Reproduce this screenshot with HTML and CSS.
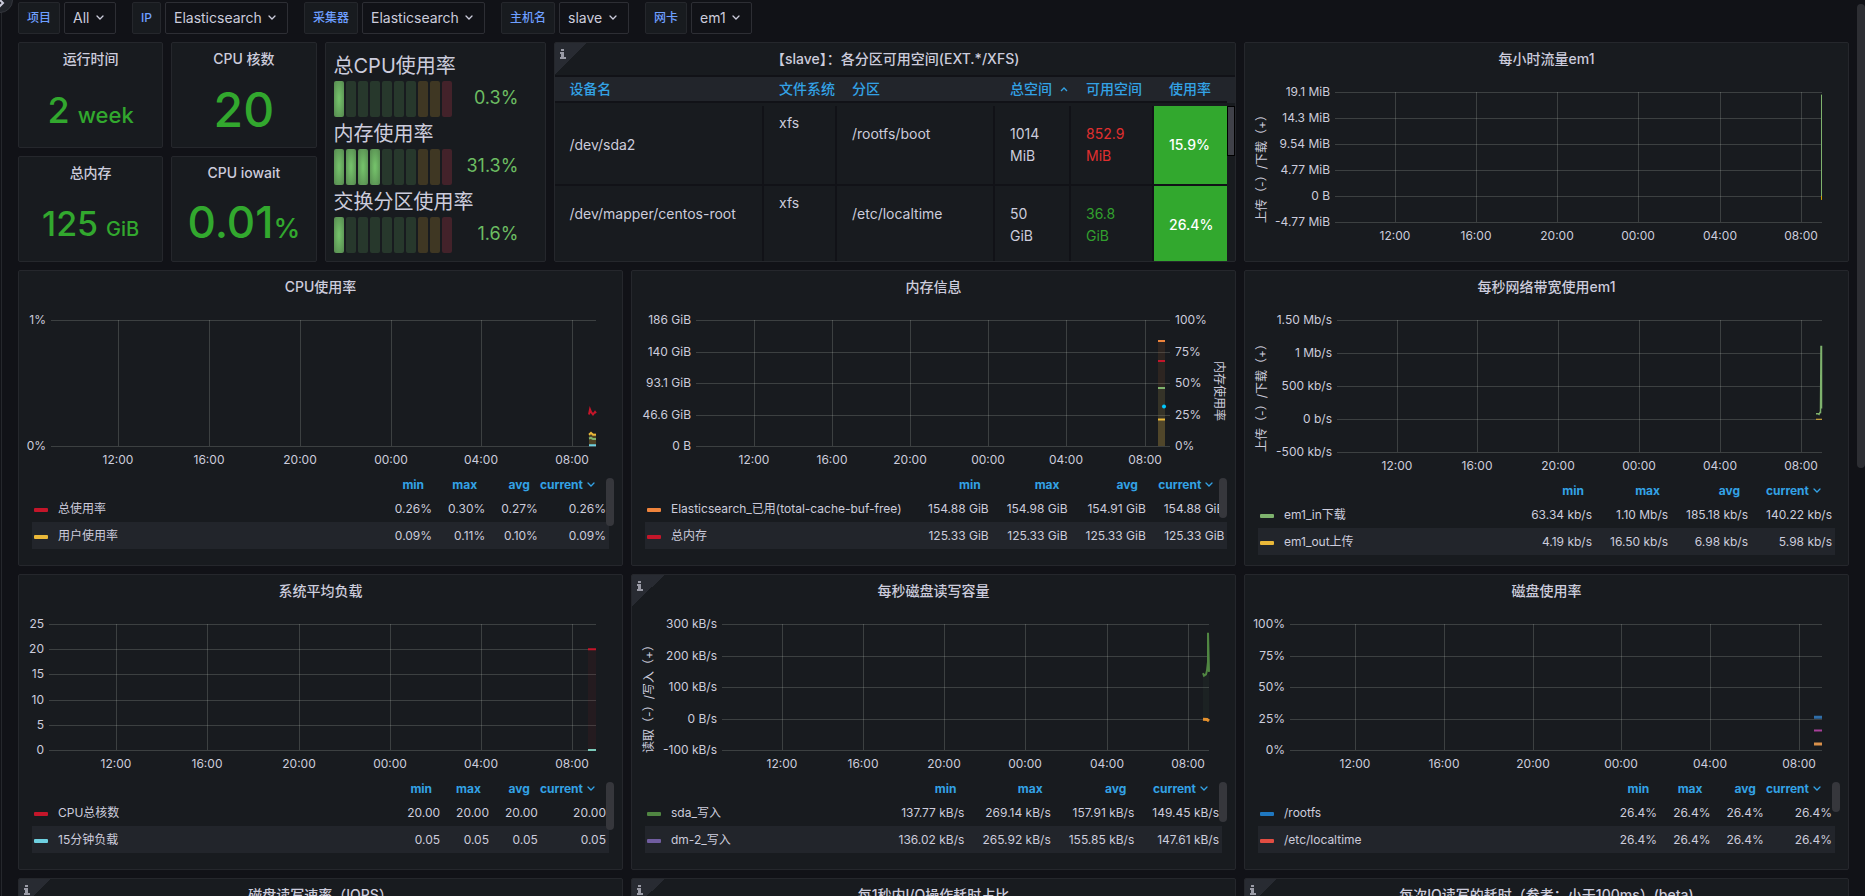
FILE: index.html
```html
<!DOCTYPE html>
<html lang="zh-CN">
<head>
<meta charset="utf-8">
<title>Node Dashboard</title>
<link rel="stylesheet" href="styles.css">
</head>
<body>
<button class="dock" aria-label="展开菜单"><svg width="12" height="12" viewBox="0 0 12 12"><path d="M3 1l5 5-5 5" fill="none" stroke="#ccccdc" stroke-width="2"/></svg></button>
<div class="page">
  <form class="vars">
    <div class="var"><label for="v1">项目</label><select id="v1"><option>All</option></select></div>
    <div class="var"><label for="v2">IP</label><select id="v2"><option>Elasticsearch</option></select></div>
    <div class="var"><label for="v3">采集器</label><select id="v3"><option>Elasticsearch</option></select></div>
    <div class="var"><label for="v4">主机名</label><select id="v4"><option>slave</option></select></div>
    <div class="var"><label for="v5">网卡</label><select id="v5"><option>em1</option></select></div>
  </form>
  <main class="grid">
    <section class="panel stat s-uptime"><h2>运行时间</h2><p class="v36">2<span class="unit spaced">week</span></p></section>
    <section class="panel stat s-cores"><h2>CPU 核数</h2><p class="v48">20</p></section>
    <section class="panel stat s-mem"><h2>总内存</h2><p class="v34">125<span class="unit spaced">GiB</span></p></section>
    <section class="panel stat s-iowait"><h2>CPU iowait</h2><p class="v44">0.01<span class="unit">%</span></p></section>

    <section class="panel gauges">
      <div class="gauge"><h3>总CPU使用率</h3><div class="row"><div class="lcd" data-lit="1"></div><span>0.3%</span></div></div>
      <div class="gauge"><h3>内存使用率</h3><div class="row"><div class="lcd" data-lit="4"></div><span>31.3%</span></div></div>
      <div class="gauge"><h3>交换分区使用率</h3><div class="row"><div class="lcd" data-lit="1"></div><span>1.6%</span></div></div>
    </section>

    <section class="panel disks">
      <span class="info"><svg width="6" height="10" viewBox="0 0 6 10"><path d="M1 0h3v2H1zM0 3h4v5h2v2H0V8h1V5H0z"/></svg></span>
      <h2>【slave】：各分区可用空间(EXT.*/XFS)</h2>
      <div class="scroller">
        <table class="parts">
          <colgroup><col><col class="c-fs"><col class="c-mount"><col class="c-total"><col class="c-free"><col class="c-use"></colgroup>
          <thead><tr><th>设备名</th><th>文件系统</th><th>分区</th><th>总空间<svg class="sort" width="8" height="5" viewBox="0 0 8 5"><path d="M1 4l3-3 3 3"/></svg></th><th>可用空间</th><th>使用率</th></tr></thead>
          <tbody>
            <tr><td>/dev/sda2</td><td class="l3">xfs</td><td class="l2">/rootfs/boot</td><td>1014 MiB</td><td class="bad">852.9 MiB</td><td class="use">15.9%</td></tr>
            <tr><td class="l2">/dev/mapper/centos-root</td><td class="l3">xfs</td><td class="l2">/etc/localtime</td><td>50<br>GiB</td><td class="good">36.8 GiB</td><td class="use">26.4%</td></tr>
          </tbody>
        </table>
        <span class="thumb square"></span>
      </div>
    </section>

    <section class="panel tall-6"><h2>每小时流量em1</h2><svg class="chart" data-chart="hourly"></svg></section>

    <section class="panel graph"><h2>CPU使用率</h2><svg class="chart" data-chart="cpu"></svg>
      <div class="legend"><table>
        <thead><tr><th></th><th>min</th><th>max</th><th>avg</th><th class="cur">current</th></tr></thead>
        <tbody>
          <tr><td><i class="key red"></i>总使用率</td><td>0.26%</td><td>0.30%</td><td>0.27%</td><td>0.26%</td></tr>
          <tr><td><i class="key yellow"></i>用户使用率</td><td>0.09%</td><td>0.11%</td><td>0.10%</td><td>0.09%</td></tr>
        </tbody></table><span class="thumb h48"></span></div>
    </section>

    <section class="panel graph"><h2>内存信息</h2><svg class="chart" data-chart="mem"></svg>
      <div class="legend wide long-names"><table>
        <thead><tr><th></th><th>min</th><th>max</th><th>avg</th><th class="cur">current</th></tr></thead>
        <tbody>
          <tr><td><i class="key orange"></i>Elasticsearch_已用(total-cache-buf-free)</td><td>154.88 GiB</td><td>154.98 GiB</td><td>154.91 GiB</td><td>154.88 GiB</td></tr>
          <tr><td><i class="key red"></i>总内存</td><td>125.33 GiB</td><td>125.33 GiB</td><td>125.33 GiB</td><td>125.33 GiB</td></tr>
        </tbody></table><span class="thumb h40"></span></div>
    </section>

    <section class="panel graph"><h2>每秒网络带宽使用em1</h2><svg class="chart" data-chart="net"></svg>
      <div class="legend wide"><table>
        <thead><tr><th></th><th>min</th><th>max</th><th>avg</th><th class="cur">current</th></tr></thead>
        <tbody>
          <tr><td><i class="key green"></i>em1_in下载</td><td>63.34 kb/s</td><td>1.10 Mb/s</td><td>185.18 kb/s</td><td>140.22 kb/s</td></tr>
          <tr><td><i class="key yellow"></i>em1_out上传</td><td>4.19 kb/s</td><td>16.50 kb/s</td><td>6.98 kb/s</td><td>5.98 kb/s</td></tr>
        </tbody></table></div>
    </section>

    <section class="panel graph"><h2>系统平均负载</h2><svg class="chart" data-chart="load"></svg>
      <div class="legend"><table>
        <thead><tr><th></th><th>min</th><th>max</th><th>avg</th><th class="cur">current</th></tr></thead>
        <tbody>
          <tr><td><i class="key red"></i>CPU总核数</td><td>20.00</td><td>20.00</td><td>20.00</td><td>20.00</td></tr>
          <tr><td><i class="key cyan"></i>15分钟负载</td><td>0.05</td><td>0.05</td><td>0.05</td><td>0.05</td></tr>
        </tbody></table><span class="thumb h48"></span></div>
    </section>

    <section class="panel graph">
      <span class="info"><svg width="6" height="10" viewBox="0 0 6 10"><path d="M1 0h3v2H1zM0 3h4v5h2v2H0V8h1V5H0z"/></svg></span>
      <h2>每秒磁盘读写容量</h2><svg class="chart" data-chart="io"></svg>
      <div class="legend wide"><table>
        <thead><tr><th></th><th>min</th><th>max</th><th>avg</th><th class="cur">current</th></tr></thead>
        <tbody>
          <tr><td><i class="key dkgreen"></i>sda_写入</td><td>137.77 kB/s</td><td>269.14 kB/s</td><td>157.91 kB/s</td><td>149.45 kB/s</td></tr>
          <tr><td><i class="key purple"></i>dm-2_写入</td><td>136.02 kB/s</td><td>265.92 kB/s</td><td>155.85 kB/s</td><td>147.61 kB/s</td></tr>
        </tbody></table><span class="thumb h40"></span></div>
    </section>

    <section class="panel graph"><h2>磁盘使用率</h2><svg class="chart" data-chart="usage"></svg>
      <div class="legend"><table>
        <thead><tr><th></th><th>min</th><th>max</th><th>avg</th><th class="cur">current</th></tr></thead>
        <tbody>
          <tr><td><i class="key blue"></i>/rootfs</td><td>26.4%</td><td>26.4%</td><td>26.4%</td><td>26.4%</td></tr>
          <tr><td><i class="key coral"></i>/etc/localtime</td><td>26.4%</td><td>26.4%</td><td>26.4%</td><td>26.4%</td></tr>
        </tbody></table><span class="thumb h30"></span></div>
    </section>

    <section class="panel graph"><span class="info"><svg width="6" height="10" viewBox="0 0 6 10"><path d="M1 0h3v2H1zM0 3h4v5h2v2H0V8h1V5H0z"/></svg></span><h2>磁盘读写速率（IOPS）</h2></section>
    <section class="panel graph"><span class="info"><svg width="6" height="10" viewBox="0 0 6 10"><path d="M1 0h3v2H1zM0 3h4v5h2v2H0V8h1V5H0z"/></svg></span><h2>每1秒内I/O操作耗时占比</h2></section>
    <section class="panel graph"><span class="info"><svg width="6" height="10" viewBox="0 0 6 10"><path d="M1 0h3v2H1zM0 3h4v5h2v2H0V8h1V5H0z"/></svg></span><h2>每次IO读写的耗时（参考：小于100ms）(beta)</h2></section>
  </main>
</div>
<span class="page-thumb"></span>
<script src="charts.js"></script>
</body>
</html>
```
FILE: styles.css
```css
* { box-sizing: border-box; }
html, body { height: 100%; overflow: hidden; }
body { margin: 0; background: #111217; color: #ccccdc; font: 14px/22px Inter, "Noto Sans CJK SC", sans-serif; }
h2, h3, p { margin: 0; font-weight: 400; }

.page { margin-left: 1px; height: 100%; padding: 2px 16px 0; border-left: 1px solid #25272c; overflow: hidden; }
.dock { position: absolute; left: -13px; top: -13px; width: 26px; height: 26px; padding: 0; border: 1px solid #33353c; border-radius: 50%; background: #22252b; }
.dock svg { position: absolute; left: 7px; top: 9px; }

.vars { display: flex; gap: 16px; margin: 0 0 8px; }
.var { display: flex; gap: 4px; }
.var label { height: 32px; padding: 0 8px; border: 1px solid #25272c; border-radius: 2px; background: #181b1f; color: #6e9fff; font-size: 12px; font-weight: 500; line-height: 30px; }
.var select { appearance: none; height: 32px; margin: 0; padding: 0 25px 0 8px; border: 1px solid #2d2e34; border-radius: 2px; color: #ccccdc; font: inherit;
  background: #111217 url("data:image/svg+xml,%3Csvg xmlns='http://www.w3.org/2000/svg' width='8' height='6'%3E%3Cpath d='M1 1l3 3 3-3' fill='none' stroke='%23ccccdc' stroke-width='1.3' stroke-linecap='round'/%3E%3C/svg%3E") no-repeat right 11px center; }

.grid { display: grid; grid-template-columns: repeat(24, minmax(0, 1fr)); grid-auto-rows: 30px; gap: 8px; }
.panel { position: relative; min-width: 0; border: 1px solid #25272c; border-radius: 2px; background: #181b1f; overflow: hidden; }
.panel h2 { height: 35px; padding: 5px 8px 0; font-size: 14px; font-weight: 500; line-height: 22px; text-align: center; white-space: nowrap; }
.graph { grid-column: span 8; grid-row: span 8; }
.tall-6 { grid-column: 17 / span 8; grid-row: 1 / span 6; }

.stat { display: flex; flex-direction: column; }
.stat p { flex: 1; display: flex; align-items: baseline; justify-content: center; color: #32a82e; font-weight: 500; line-height: 64px; }
.s-uptime { grid-area: 1 / 1 / span 3 / span 2; }
.s-cores { grid-area: 1 / 3 / span 3 / span 2; }
.s-mem { grid-area: 4 / 1 / span 3 / span 2; }
.s-iowait { grid-area: 4 / 3 / span 3 / span 2; }
.v34 { font-size: 34px; }
.v36 { font-size: 36px; }
.v44 { font-size: 44px; }
.v48 { font-size: 48px; }
.unit { font-size: 22px; }
.v34 .unit { font-size: 20px; }
.v44 .unit { font-size: 27px; }
.spaced { margin-left: 8px; }

.gauges { grid-area: 1 / 5 / span 6 / span 3; padding: 6px 8px; }
.gauge h3 { height: 32px; font-size: 20px; line-height: 34px; white-space: nowrap; }
.gauge .row { display: flex; justify-content: space-between; height: 36px; padding-right: 19px; }
.lcd { display: flex; gap: 2px; width: 118px; }
.lcd i { flex: 1; border-radius: 2px; }
.lcd .g { background: #27382c; }
.lcd .o { background: #3f3723; }
.lcd .r { background: #43222a; }
.lcd .lit { background: radial-gradient(ellipse at center, #73bf69 10%, #55884f 100%); }
.gauge span { color: #6cbd62; font-size: 18px; line-height: 34px; }

.info { position: absolute; left: 0; top: 0; width: 32px; height: 32px; background: linear-gradient(135deg, #282b32 50%, transparent 50%); }
.info svg { position: absolute; left: 5px; top: 6px; fill: #9a9ba6; }

.disks { grid-area: 1 / 8 / span 6 / span 9; }
.disks h2 { height: 34px; border-bottom: 2px solid #111217; }
.scroller { position: relative; }
.parts { width: calc(100% - 8px); table-layout: fixed; border-collapse: separate; border-spacing: 0; }
.c-fs { width: 73px; }
.c-mount { width: 158px; }
.c-total { width: 76px; }
.c-free { width: 83px; }
.c-use { width: 73px; }
.parts th { height: 26px; padding: 0 0 0 15px; border-bottom: 2px solid #111217; background: #22252b; color: #33a2e5; font-weight: 500; line-height: 24px; text-align: left; white-space: nowrap; }
.parts th:last-child { box-shadow: 8px 0 0 #22252b; }
.parts thead::after { content: ""; display: block; height: 3px; }
.sort { margin-left: 8px; vertical-align: 2px; fill: none; stroke: #33a2e5; stroke-width: 1.3; }
.parts td { height: 80px; padding: 0 16px 0 15px; border-right: 2px solid #111217; border-bottom: 2px solid #111217; vertical-align: middle; }
.parts td.l2 { padding: 0 0 22px 15px; }
.parts td.l3 { padding-bottom: 44px; }
.parts th:first-child, .parts td:first-child { padding-left: 14px; padding-right: 0; }
.parts .bad { color: #e02f2f; }
.parts .good { color: #32a02e; }
.parts td.use { border-right: 0; background: #32a82e; color: #fff; font-weight: 500; }

.chart { display: block; width: 100%; }
.chart text { fill: #ccccdc; font-size: 12px; }
.chart .grid-line { stroke: rgba(204, 214, 204, .2); stroke-width: 1; shape-rendering: crispEdges; }

.legend { position: relative; margin: 0 8px 0 13px; overflow: hidden; }
.legend table { width: calc(100% - 5px); border-collapse: collapse; font-size: 12px; line-height: 16px; white-space: nowrap; }
.legend th { height: 21px; padding: 0 10px 0 0; color: #33a2e5; font-weight: 700; text-align: right; }
.legend .cur { padding-right: 26px; background: url("data:image/svg+xml,%3Csvg xmlns='http://www.w3.org/2000/svg' width='8' height='6'%3E%3Cpath d='M1 1l3 3 3-3' fill='none' stroke='%2333a2e5' stroke-width='1.3' stroke-linecap='round'/%3E%3C/svg%3E") no-repeat right 14px center; }
.legend td { height: 27px; padding: 0 2px 0 14px; text-align: right; }
.legend td:last-child { padding-right: 3px; }
.wide td { padding-left: 16px; }
.legend td:first-child { width: 100%; padding-left: 2px; text-align: left; }
.long-names td:first-child { min-width: 267px; }
.legend tr:nth-child(2) td { background: #22252b; }
.key { display: inline-block; width: 14px; height: 4px; margin-right: 10px; border-radius: 1px; vertical-align: 1px; }
.red { background: #c4162a; }
.yellow { background: #eab839; }
.orange { background: #ef843c; }
.green { background: #7eb26d; }
.dkgreen { background: #508642; }
.cyan { background: #6ed0e0; }
.purple { background: #705da0; }
.blue { background: #1f78c1; }
.coral { background: #e24d42; }
.thumb { position: absolute; right: 0; top: 4px; width: 8px; border-radius: 4px; background: #36373c; }
.h48 { height: 48px; }
.h40 { height: 40px; }
.h30 { height: 30px; }
.thumb.square { top: 29px; height: 50px; border: 1px solid #000; border-radius: 0; background: #404149; }
.page-thumb { position: fixed; right: 0; top: 4px; width: 8px; height: 464px; border-radius: 4px; background: #2d2e33; }
```
FILE: charts.js
```js
const NS = 'http://www.w3.org/2000/svg';
const TIMES = ['12:00', '16:00', '20:00', '00:00', '04:00', '08:00'];
const TOP = 14;

/* Series points are [pixels left of the right edge, fraction of the plot height]. */
const CHARTS = {
  hourly: { left: 90, height: 130, y: ['19.1 MiB', '14.3 MiB', '9.54 MiB', '4.77 MiB', '0 B', '-4.77 MiB'], title: '上传（-）/下载（+）', titleY: 88,
    series: [{ c: '#7eb26d', w: 1, p: [[0.5, 0.02], [0.5, 0.8]] }, { c: '#cca300', w: 1, p: [[0.5, 0.8], [0.5, 0.83]] }] },
  cpu: { left: 32, height: 126, y: ['1%', '0%'],
    fills: [{ c: '#eab839', o: .25, from: 0.9, right: 0, w: 7 }],
    series: [
      { c: '#c4162a', p: [[7, .75], [6, .71], [5, .73], [3, .75], [1, .73], [0, .74]] },
      { c: '#eab839', p: [[7, .91], [5, .895], [3, .91], [0, .91]] },
      { c: '#7eb26d', p: [[7, .94], [5, .935], [3, .945], [0, .945]] },
      { c: '#6ed0e0', p: [[7, .995], [0, .995]] }] },
  mem: { left: 64, right: 65, pad: 5, height: 126, y: ['186 GiB', '140 GiB', '93.1 GiB', '46.6 GiB', '0 B'], y2: ['100%', '75%', '50%', '25%', '0%'], title2: '内存使用率',
    fills: [{ c: '#ef843c', o: .1, from: .17, right: 5, w: 7 }, { c: '#7eb26d', o: .1, from: .54, right: 5, w: 7 }, { c: '#eab839', o: .15, from: .79, right: 5, w: 7 }],
    series: [
      { c: '#ef843c', p: [[12, .167], [5, .167]] },
      { c: '#c4162a', p: [[12, .325], [5, .325]] },
      { c: '#7eb26d', p: [[12, .54], [5, .54]] },
      { c: '#eab839', p: [[12, .79], [5, .79]] }],
    dot: { c: '#00c8ff', x: 6, y: .687 } },
  net: { left: 92, height: 132, y: ['1.50 Mb/s', '1 Mb/s', '500 kb/s', '0 b/s', '-500 kb/s'], title: '上传（-）/下载（+）', titleY: 89,
    series: [
      { c: '#eab839', w: 1, p: [[6, .752], [0, .752]] },
      { c: '#7eb26d', w: 1.5, p: [[6, .71], [4, .71], [3, .715], [2, .7], [1.5, .7], [1, .2], [.5, .2], [.5, .67]] }] },
  load: { left: 30, height: 126, y: ['25', '20', '15', '10', '5', '0'],
    fills: [{ c: '#c4162a', o: .07, from: .2, right: 0, w: 8 }],
    series: [{ c: '#c4162a', p: [[8, .2], [0, .2]] }, { c: '#7ac8b8', p: [[8, 1], [0, 1]] }] },
  io: { left: 90, height: 126, y: ['300 kB/s', '200 kB/s', '100 kB/s', '0 B/s', '-100 kB/s'], title: '读取（-）/写入（+）', titleY: 86,
    fills: [{ c: '#7eb26d', o: .05, from: .4, to: .75, right: 0, w: 6 }],
    series: [
      { c: '#508642', p: [[6, .39], [5, .41], [3, .4], [2, .37], [1, .3], [1, .07], [0, .38]] },
      { c: '#e5912d', w: 3, p: [[6, .755], [2, .757], [0, .77]] }] },
  usage: { left: 45, height: 126, y: ['100%', '75%', '50%', '25%', '0%'],
    series: [
      { c: '#2f6ea8', w: 3, p: [[8, .74], [0, .74]] },
      { c: '#a8409a', p: [[8, .845], [0, .845]] },
      { c: '#d8904a', w: 3, p: [[8, .952], [0, .952]] }] },
};

function add(svg, tag, attrs, text) {
  const el = document.createElementNS(NS, tag);
  for (const k in attrs) el.setAttribute(k, attrs[k]);
  if (text) el.textContent = text;
  svg.appendChild(el);
}

function draw(svg) {
  const c = CHARTS[svg.dataset.chart];
  svg.replaceChildren();
  const width = svg.parentNode.clientWidth;
  const x0 = c.left, x1 = width - (c.right || 26), w = x1 - x0 - (c.pad || 0), h = c.height, bottom = TOP + h;
  svg.setAttribute('height', h + 42);

  c.y.forEach((label, i) => {
    const y = Math.round(TOP + h * i / (c.y.length - 1));
    add(svg, 'line', { class: 'grid-line', x1: x0, x2: x1, y1: y, y2: y });
    add(svg, 'text', { x: x0 - 5, y: y + 4, 'text-anchor': 'end' }, label);
    if (c.y2) add(svg, 'text', { x: x1 + 5, y: y + 4 }, c.y2[i]);
  });
  TIMES.forEach((label, i) => {
    const x = Math.round(x0 + w * (0.123 + i / 6));
    add(svg, 'line', { class: 'grid-line', x1: x, x2: x, y1: TOP, y2: bottom });
    add(svg, 'text', { x, y: bottom + 18, 'text-anchor': 'middle' }, label);
  });
  if (c.title) add(svg, 'text', { transform: `translate(21 ${c.titleY}) rotate(-90)`, 'text-anchor': 'middle' }, c.title);
  if (c.title2) add(svg, 'text', { transform: `translate(${width - 20} 85) rotate(90)`, 'text-anchor': 'middle' }, c.title2);

  (c.fills || []).forEach(f => add(svg, 'rect', { x: x1 - f.right - f.w, y: TOP + h * f.from, width: f.w, height: h * ((f.to || 1) - f.from), fill: f.c, 'fill-opacity': f.o }));
  c.series.forEach(s => add(svg, 'polyline', {
    points: s.p.map(([dx, fy]) => `${x1 - dx},${TOP + h * fy}`).join(' '),
    fill: 'none', stroke: s.c, 'stroke-width': s.w || 2,
  }));
  if (c.dot) add(svg, 'circle', { cx: x1 - c.dot.x, cy: TOP + h * c.dot.y, r: 2, fill: c.dot.c });
}

document.querySelectorAll('.lcd').forEach(el => {
  for (let i = 0; i < 10; i++) {
    const cell = document.createElement('i');
    cell.className = i < +el.dataset.lit ? 'lit' : i < 7 ? 'g' : i < 9 ? 'o' : 'r';
    el.appendChild(cell);
  }
});

function drawAll() { document.querySelectorAll('.chart').forEach(draw); }
drawAll();
addEventListener('resize', drawAll);
```
